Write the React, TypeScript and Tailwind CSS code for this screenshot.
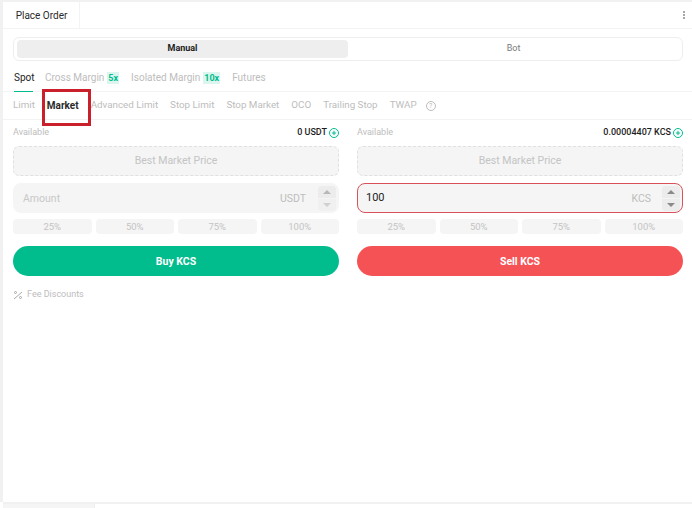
const font = "font-['Roboto',sans-serif]";

function PercentRow() {
  return (
    <div className="grid grid-cols-4 gap-1 mt-[6px]">
      {["25%", "50%", "75%", "100%"].map((p) => (
        <div key={p} className="h-[15px] rounded bg-[#f5f5f5] text-[9.5px] leading-[15px] text-center text-[#c4c4c4]">
          {p}
        </div>
      ))}
    </div>
  );
}

function Stepper({ dark }: { dark?: boolean }) {
  const up = dark ? "border-b-[#8a8a8a]" : "border-b-[#b8b8b8]";
  const down = dark ? "border-t-[#8a8a8a]" : "border-t-[#d0d0d0]";
  return (
    <div className="flex flex-col gap-px w-[18px] h-[25px]">
      <div className="flex-1 flex items-center justify-center rounded-t bg-[#ececec]">
        <span className={`w-0 h-0 border-x-[4px] border-x-transparent border-b-[4px] ${up}`} />
      </div>
      <div className={`flex-1 flex items-center justify-center rounded-b ${dark ? "bg-[#ececec]" : "bg-[#f0f0f0]"}`}>
        <span className={`w-0 h-0 border-x-[4px] border-x-transparent border-t-[4px] ${down}`} />
      </div>
    </div>
  );
}

function OrderForm(props: {
  balance: string;
  unit: string;
  value?: string;
  action: string;
  btnClass: string;
}) {
  const { balance, unit, value, action, btnClass } = props;
  return (
    <div className="flex-1 min-w-0">
      <div className="flex items-center justify-between h-[13px]">
        <span className="text-[9px] text-[#bdbdbd]">Available</span>
        <span className="flex items-center gap-[2px] text-[9px] font-medium text-[#1d1d1d]">
          {balance}
          <svg width="10" height="10" viewBox="0 0 10 10" fill="none" stroke="#01bc8d" strokeWidth="1">
            <circle cx="5" cy="5" r="4.5" />
            <path d="M5 2.8 V7.2 M2.8 5 H7.2" />
          </svg>
        </span>
      </div>

      <div className="mt-[7px] h-[30px] flex items-center justify-center rounded-md border border-dashed border-[#e0e0e0] bg-[#f5f5f5] text-[10.5px] text-[#c4c4c4]">
        Best Market Price
      </div>

      {value ? (
        <div className="mt-[7px] h-[30px] flex items-center rounded-lg border border-[#d9525a] bg-[#f5f5f5] pl-2 pr-[2px]">
          <span className="pt-px text-[11px] text-[#1d1d1d]">{value}</span>
          <span className="ml-auto mr-[11px] pt-px text-[10.5px] text-[#bdbdbd]">{unit}</span>
          <Stepper dark />
        </div>
      ) : (
        <div className="mt-[7px] h-[30px] flex items-center rounded-lg bg-[#f5f5f5] pl-[10px] pr-[3px]">
          <span className="pt-px text-[10.5px] text-[#c8c8c8]">Amount</span>
          <span className="ml-auto mr-3 pt-px text-[10.5px] text-[#bdbdbd]">{unit}</span>
          <Stepper />
        </div>
      )}

      <PercentRow />

      <button className={`mt-3 w-full h-[30px] pt-px rounded-full text-[10.5px] font-bold text-white ${btnClass}`}>
        {action}
      </button>
    </div>
  );
}

export default function App() {
  return (
    <div className={`relative w-[692px] h-[508px] bg-white overflow-hidden flex flex-col ${font}`}>
      <div className="h-[2px] bg-[#f1f1f1]" />

      <div className="flex-1 flex flex-col border-l-[3px] border-[#f1f1f1]">
        {/* Header */}
        <div className="h-[27px] flex items-center justify-between border-b border-[#f3f3f3] pr-[7px]">
          <div className="h-full w-[77px] flex items-center justify-center border-r border-[#f3f3f3] pl-px text-[10px] text-[#2a2a2a]">
            Place Order
          </div>
          <div className="flex flex-col gap-px">
            <span className="w-[2px] h-[2px] bg-[#a8a8a8]" />
            <span className="w-[2px] h-[2px] bg-[#a8a8a8]" />
            <span className="w-[2px] h-[2px] bg-[#a8a8a8]" />
          </div>
        </div>

        {/* Manual / Bot */}
        <div className="mt-2 ml-[10px] w-[670px] h-6 flex items-center rounded-md border border-[#eeeeee] p-[3px] text-[9px]">
          <div className="w-[331px] h-[18px] flex items-center justify-center rounded bg-[#eeeeee] font-bold text-[#1d1d1d]">
            Manual
          </div>
          <div className="flex-1 text-center text-[#7a7a7a]">Bot</div>
        </div>

        {/* Margin tabs */}
        <div className="mt-2 h-[23px] flex items-start gap-3 border-b border-[#f3f3f3] pl-[11px] text-[10px] leading-[17px] text-[#bdbdbd]">
          <span className="h-[23px] border-b border-[#01bc8d] text-[#1d1d1d] w-[19px]">Spot</span>
          <span className="flex items-center gap-[3px]">
            Cross Margin
            <span className="px-[1px] h-3 leading-3 text-[9px] font-bold bg-[#dcf6ef] text-[#01bc8d]">5x</span>
          </span>
          <span className="flex items-center gap-[3px]">
            Isolated Margin
            <span className="px-[1px] h-3 leading-3 text-[9px] font-bold bg-[#dcf6ef] text-[#01bc8d]">10x</span>
          </span>
          <span>Futures</span>
        </div>

        {/* Order types */}
        <div className="h-[28px] flex items-center gap-3 border-b border-[#f3f3f3] pl-[10px] text-[9.8px] text-[#bdbdbd]">
          <span>Limit</span>
          <span className="text-[10px] font-bold text-[#2a2a2a]">Market</span>
          <span>Advanced Limit</span>
          <span>Stop Limit</span>
          <span>Stop Market</span>
          <span>OCO</span>
          <span>Trailing Stop</span>
          <span>TWAP</span>
          <span className="-ml-[3px] flex items-center justify-center w-[10px] h-[10px] rounded-full border border-[#bdbdbd] text-[7px] leading-[8px]">
            ?
          </span>
        </div>

        {/* Forms */}
        <div className="mt-[6px] ml-[10px] w-[670px] flex gap-[18px]">
          <OrderForm balance="0 USDT" unit="USDT" action="Buy KCS" btnClass="bg-[#01bc8d]" />
          <OrderForm balance="0.00004407 KCS" unit="KCS" value="100" action="Sell KCS" btnClass="bg-[#f55256]" />
        </div>

        {/* Fee */}
        <div className="mt-3 ml-[10px] flex items-center gap-1 text-[9px] text-[#bdbdbd]">
          <svg width="10" height="10" viewBox="0 0 10 10" fill="none" stroke="#a8a8a8" strokeWidth="1">
            <path d="M1 9 L9 2" />
            <circle cx="2.5" cy="2.5" r="1" />
            <circle cx="7.5" cy="7.5" r="1" />
          </svg>
          Fee Discounts
        </div>
      </div>

      {/* Bottom edge */}
      <div className="h-[6px] flex border-t-2 border-[#f1f1f1] ml-[3px]">
        <div className="w-[92px] bg-[#f5f5f5] border-r border-[#eeeeee]" />
      </div>

      {/* Red annotation box */}
      <div className="absolute left-[42px] top-[89px] w-[49px] h-[37px] border-[3px] border-[#c9202c]" />
    </div>
  );
}
